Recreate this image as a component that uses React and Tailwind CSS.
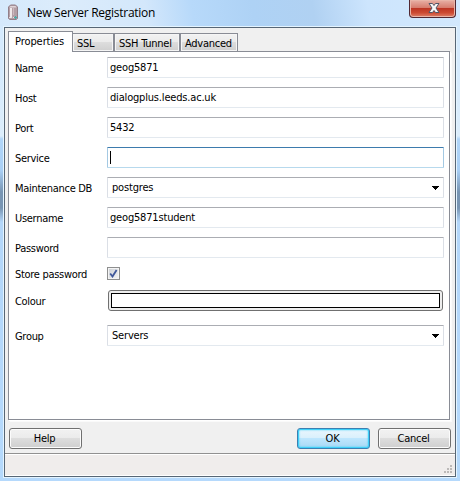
import React from "react";

const rows = [
  { label: "Name", value: "geog5871" },
  { label: "Host", value: "dialogplus.leeds.ac.uk" },
  { label: "Port", value: "5432" },
  { label: "Service", value: "", focused: true },
  { label: "Maintenance DB", value: "postgres", select: true },
  { label: "Username", value: "geog5871student" },
  { label: "Password", value: "" },
];

function Label({ children }) {
  return <div className="w-[98px] shrink-0 pl-[6px] pt-[2px] leading-[20px] tracking-[-0.3px]">{children}</div>;
}

function Field({ value, focused, select }) {
  const border = focused
    ? "border-t-[#3d7bad] border-x-[#a4c9e3] border-b-[#b7d9ed]"
    : "border-t-[#abadb3] border-x-[#dbdfe6] border-b-[#e3e9ef]";
  return (
    <div className={`flex h-[21px] w-[337px] items-center justify-between rounded-[1px] border bg-white pr-[4px] ${select ? "pl-[4px]" : "pl-[2px]"} ${border}`}>
      {focused ? <span className="h-[13px] w-px bg-black" /> : <span className="leading-[19px] tracking-[-0.18px]">{value}</span>}
      {select && (
        <svg width="7" height="4" viewBox="0 0 7 4" shapeRendering="crispEdges">
          <path d="M0 0H7V1H6V2H5V3H4V4H3V3H2V2H1V1H0Z" fill="#000" />
        </svg>
      )}
    </div>
  );
}

function Button({ children, primary }) {
  const look = primary
    ? "border-[#3c7fb1] bg-[linear-gradient(#eaf6fd_0%,#d9f0fc_48%,#bee6fd_50%,#a7d9f5_100%)] shadow-[inset_0_0_0_1px_#3fd0f8,inset_0_0_2px_1px_#3fd0f8]"
    : "border-[#707070] bg-[linear-gradient(#f2f2f2_0%,#ebebeb_48%,#dddddd_50%,#cfcfcf_100%)] shadow-[inset_0_0_0_1px_#fcfcfc]";
  return <button className={`h-[21px] w-[73px] rounded-[3px] border pt-px pr-[2px] leading-[18px] tracking-[-0.25px] ${look}`}>{children}</button>;
}

function Tab({ children, width }) {
  return (
    <div className={`h-[18px] border border-b-0 border-[#898c95] bg-[linear-gradient(#f2f2f2_0%,#ebebeb_48%,#dddddd_50%,#cfcfcf_100%)] pl-[4px] leading-[19px] tracking-[-0.25px] shadow-[inset_0_0_0_1px_#f5f5f5] ${width}`}>{children}</div>
  );
}

export default function App() {
  return (
    <div className="h-[481px] w-[460px] overflow-hidden bg-[linear-gradient(#d5eafd_0px,#d5eafd_70px,#dcedfb_136px,#b0d5f8_139px,#a9cff5_170px,#7895b3_192px,#7895b3_208px,#b3d6f9_222px,#b5d9fc_481px)] font-['DejaVu_Sans_Condensed','DejaVu_Sans',sans-serif] text-[11px] text-black [font-stretch:condensed]">
      <header className="flex h-[26px] items-start justify-between bg-[linear-gradient(80deg,#d5e9fc_0%,#dcecfb_15%,#d3e7fb_32%,#b7d9fa_42%,#aed2f5_55%,#b0d1f2_68%,#cde5fd_80%,#d2e8fd_100%)] pl-[8px] pr-[4px]">
        <div className="flex items-center pt-[4px]">
          <svg width="10" height="17" viewBox="0 0 10 17">
            <path d="M.5 3L2.5 1H7.5L9.5 3V14.500L8 15.500H2L.5 14.500Z" fill="#b49fa6" stroke="#927f89" />
            <path d="M3 4V14" stroke="#f0e8ea" strokeWidth="2" />
            <path d="M5.500 4V11" stroke="#cbbac0" />
            <path d="M2.500 2H7.500L8.500 3.500H1.500Z" fill="#e0d5d9" />
            <path d="M1 13.500H6" stroke="#e7dfe2" strokeDasharray="1 1" />
            <path d="M6 13.500H9M7 12.500H8M7 14.500H8" stroke="#48aaa9" />
          </svg>
          <span className="ml-[9px] font-['Open_Sans','Noto_Sans',sans-serif] text-[12px] leading-[17px] tracking-[-0.27px] [font-stretch:normal]">New Server Registration</span>
        </div>
        <button className="flex h-[18px] w-[47px] items-center justify-center rounded-b-[4px] border border-t-0 border-[#512832] bg-[linear-gradient(#e8b1a6_0%,#d67c6d_46%,#bd3624_50%,#cc4a32_75%,#df806a_100%)] pb-[2px] pl-[2px] shadow-[inset_0_0_0_1px_#e9b5a8]">
          <svg width="12" height="10" viewBox="0 0 12 10">
            <path d="M1 .5H4.5L6 2.5 7.5 .5H11L8 5 11 9.5H7.5L6 7.5 4.5 9.5H1L4 5Z" fill="#f7f7f7" stroke="#535666" />
          </svg>
        </button>
      </header>
      <main className="ml-[4px] mt-[1px] flex h-[450px] w-[452px] flex-col border border-[#576675] bg-[#f0f0f0] shadow-[0_0_0_1px_#e4f4ff]">
        <div className="flex h-[23px] items-end pl-[3px]">
          <div className="relative z-10 mb-[-1px] h-[21px] w-[65px] border border-b-0 border-[#898c95] bg-white pl-[6px] leading-[20px] tracking-[-0.08px]">Properties</div>
          <Tab width="w-[41px] border-l-0">SSL</Tab>
          <Tab width="w-[66px]">SSH Tunnel</Tab>
          <Tab width="w-[58px]">Advanced</Tab>
        </div>
        <section className="ml-[3px] flex h-[369px] w-[442px] flex-col border border-[#898c95] bg-white pt-[5px] shadow-[1px_1px_0_#fff,2px_2px_0_#fafafa]">
          {rows.map((r) => (
            <div key={r.label} className="flex h-[30px] items-start">
              <Label>{r.label}</Label>
              <Field value={r.value} focused={r.focused} select={r.select} />
            </div>
          ))}
          <div className="flex h-[23px] items-start">
            <div className="-mt-[4px]"><Label>Store password</Label></div>
            <div className="flex h-[13px] w-[13px] items-center justify-center border border-[#8e8f8f] bg-[linear-gradient(135deg,#cbcfd5,#f6f6f6)] shadow-[inset_0_0_0_1px_#f4f4f4]">
              <svg width="9" height="9" viewBox="0 0 9 9">
                <path d="M1.2 4.5L3.5 7.5L7.6 1" fill="none" stroke="#40589a" strokeWidth="1.8" />
              </svg>
            </div>
          </div>
          <div className="flex h-[35px] items-start">
            <Label>Colour</Label>
            <div className="ml-px h-[21px] w-[335px] rounded-[3px] border border-[#707070] bg-[#eeeeee] p-[2px]">
              <div className="h-[15px] w-[329px] border border-black bg-white" />
            </div>
          </div>
          <div className="flex items-start">
            <Label>Group</Label>
            <Field value="Servers" select />
          </div>
        </section>
        <footer className="flex h-[33px] items-start pl-[4px] pt-[8px]">
          <Button>Help</Button>
          <div className="ml-[215px] flex gap-[8px]">
            <Button primary>OK</Button>
            <Button>Cancel</Button>
          </div>
        </footer>
        <div className="flex h-[23px] items-end justify-end border-t border-[#919191] bg-[#f0edec] pb-[2px] pr-[2px] shadow-[inset_0_1px_0_#fff,inset_0_-1px_0_#fff]">
          <svg width="9" height="9" viewBox="0 0 9 9" fill="#bcb9b8" shapeRendering="crispEdges">
            <path d="M6 0h2v2h-2zM3 3h2v2h-2zM6 3h2v2h-2zM0 6h2v2h-2zM3 6h2v2h-2zM6 6h2v2h-2z" />
          </svg>
        </div>
      </main>
    </div>
  );
}
